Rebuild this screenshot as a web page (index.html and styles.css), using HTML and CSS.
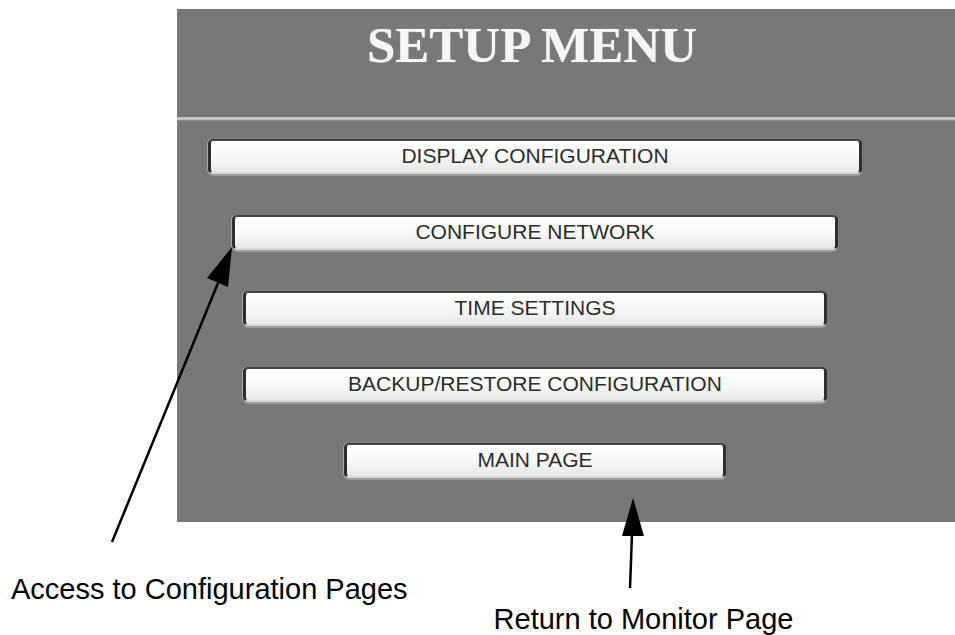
FILE: index.html
```html
<!DOCTYPE html>
<html lang="en">
<head>
  <meta charset="UTF-8">
  <meta name="viewport" content="width=device-width, initial-scale=1.0">
  <title>Setup Menu</title>
  <link rel="stylesheet" href="styles.css">
</head>
<body>
  <div class="panel">
    <div class="panel-head">
      <h1>SETUP MENU</h1>
    </div>
    <div class="rule"></div>
    <div class="menu">
      <button class="menu-btn w-display">DISPLAY CONFIGURATION</button>
      <button class="menu-btn w-network">CONFIGURE NETWORK</button>
      <button class="menu-btn w-time">TIME SETTINGS</button>
      <button class="menu-btn w-time">BACKUP/RESTORE CONFIGURATION</button>
      <button class="menu-btn w-main">MAIN PAGE</button>
    </div>
  </div>

  <div class="notes">
    <div class="note note-left">Access to Configuration Pages</div>
    <div class="note note-right">Return to Monitor Page</div>
  </div>

  <!-- callout arrows drawn over the screenshot -->
  <svg class="callouts" width="955" height="635" viewBox="0 0 955 635">
    <line x1="112" y1="542" x2="218" y2="283" stroke="#000" stroke-width="2.5"/>
    <polygon points="232,247 207,278 228,287" fill="#000"/>
    <line x1="630" y1="588" x2="632" y2="534" stroke="#000" stroke-width="2.5"/>
    <polygon points="633,498 622,536 644,536" fill="#000"/>
  </svg>
</body>
</html>
```

FILE: styles.css
```css
body {
  margin: 0;
  padding: 9px 0 0 0;
  background-color: #fff;
  font-family: "Liberation Sans", Arial, sans-serif;
  position: relative;
  width: 955px;
  height: 626px;
  overflow: hidden;
}
.panel {
  margin-left: 177px;
  width: 778px;
  height: 513px;
  background-color: #7a777a;
}
.panel-head {
  height: 108px;
  box-sizing: border-box;
  padding: 11px 68px 0 0;
  text-align: center;
}
h1 {
  margin: 0;
  font-family: "Liberation Serif", "Times New Roman", serif;
  font-size: 51px;
  line-height: 51px;
  font-weight: bold;
  color: #f6f6f6;
  text-shadow: 0 0 1px #cfcfcf;
}
.rule {
  height: 3px;
  background-color: #c4c4c4;
  border-bottom: 1px solid #8e8c8e;
}
.menu {
  display: flex;
  flex-direction: column;
  align-items: center;
  gap: 41px;
  padding: 18px 62px 0 0;
}
.menu-btn {
  height: 35px;
  box-sizing: border-box;
  padding: 0 0 2px 0;
  display: flex;
  align-items: center;
  justify-content: center;
  border-top: 2px solid #464646;
  border-left: 3px solid #2e2e2e;
  border-right: 3px solid #2e2e2e;
  border-bottom: 2px solid #d6d6d6;
  border-radius: 5px;
  background: linear-gradient(to bottom, #ffffff 0%, #f8f8f8 55%, #e6e6e6 100%);
  box-shadow: -1px 0 0 #a9a9a9, 0 2px 0 #9d9b9d;
  font-family: "Liberation Sans", Arial, sans-serif;
  font-size: 21px;
  color: #2c2c2c;
}
.w-display { width: 654px; }
.w-network { width: 606px; }
.w-time { width: 584px; }
.w-main { width: 382px; }
.notes {
  display: flex;
  align-items: flex-start;
}
.note {
  font-size: 29px;
  line-height: 34px;
  color: #000;
  white-space: nowrap;
}
.note-left {
  margin: 50px 0 0 11px;
}
.note-right {
  margin: 80px 0 0 86px;
}
.callouts {
  position: absolute;
  left: 0;
  top: 0;
  pointer-events: none;
}
```
